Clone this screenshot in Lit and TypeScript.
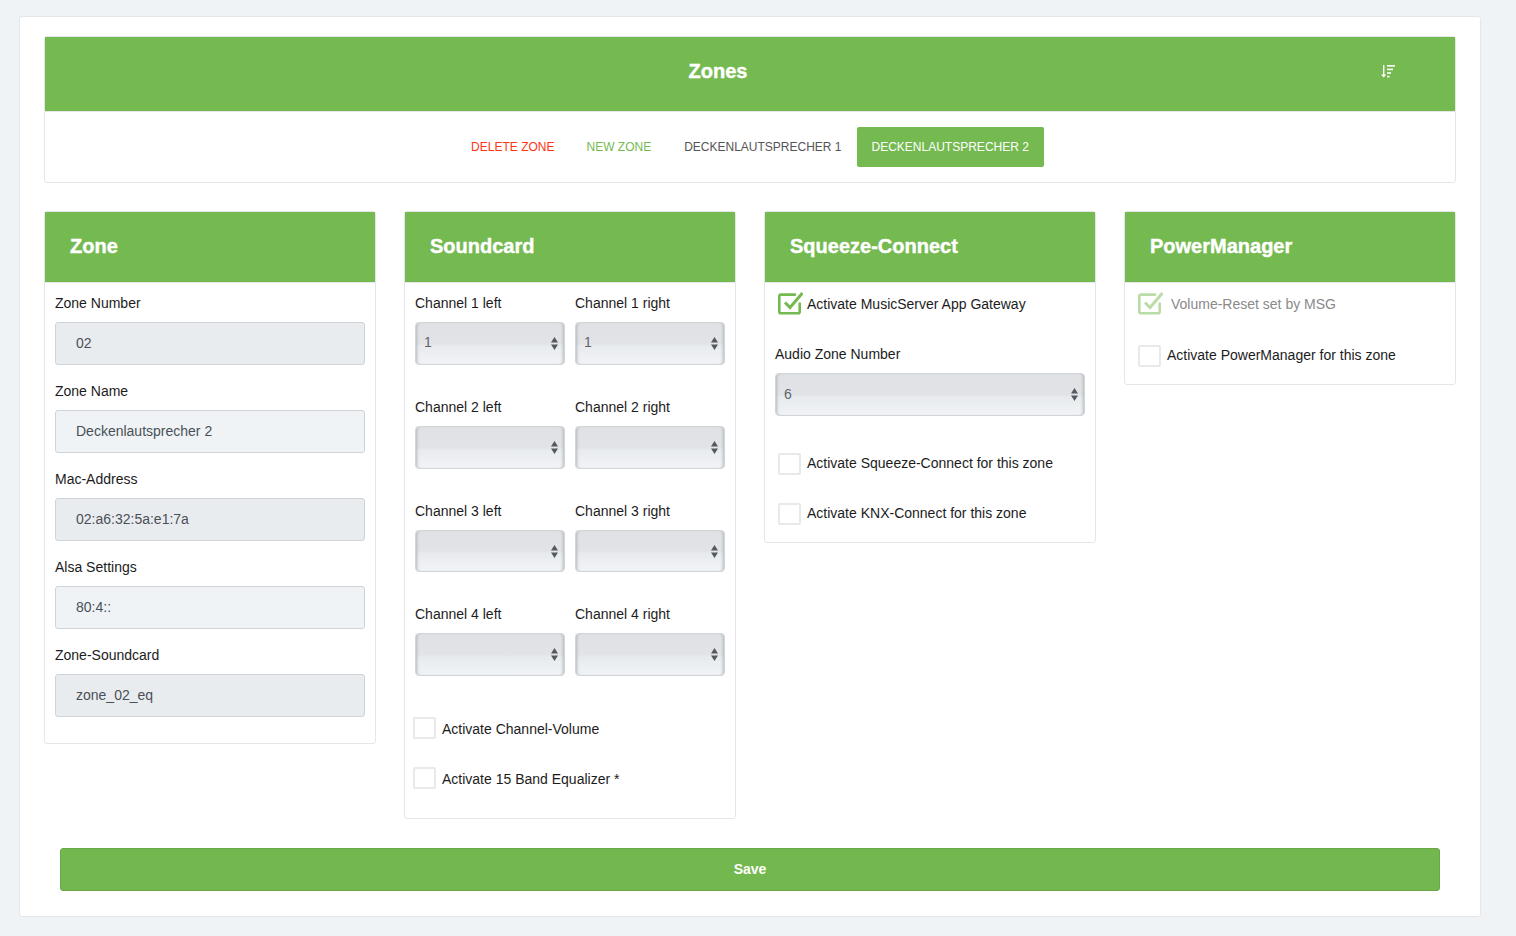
import { LitElement, html, css, svg } from "lit";
import { customElement } from "lit/decorators.js";

const sortIcon = html`<svg class="sort" width="14" height="13" viewBox="0 0 14 13" fill="#fff" aria-hidden="true">
  ${svg`<rect x="2" y="0" width="1.4" height="10"/><path d="M0 9.5h5.4L2.7 12.6z"/>
  <rect x="6" y="0" width="8" height="1.6"/><rect x="6" y="3.6" width="6" height="1.6"/><rect x="6" y="7.2" width="4" height="1.6"/><rect x="6" y="10.8" width="2.6" height="1.6"/>`}
</svg>`;

const checkMark = html`<svg class="tick" width="25" height="25" viewBox="0 0 25 25" fill="none" aria-hidden="true">
  ${svg`<path d="M21.7 11.5V19.7a1.5 1.5 0 0 1-1.500 1.500H2.800A1.500 1.500 0 0 1 1.300 19.700V4.100A1.500 1.500 0 0 1 2.800 2.600H17" stroke="currentColor" stroke-width="2.600" stroke-linecap="round"/>
  <path d="M7 10.500L12 15.500L24.500 1" stroke="currentColor" stroke-width="3"/>`}
</svg>`;

const arrows = html`<svg class="arrows" width="7" height="13" viewBox="0 0 7 13" fill="#555a60" aria-hidden="true">
  ${svg`<path d="M3.500 0L7 5.500H0zM3.500 13L0 7.500h7z"/>`}
</svg>`;

@customElement("app-root")
export class AppRoot extends LitElement {
  static styles = css`
    :host {
      display: block;
      min-height: 936px;
      box-sizing: border-box;
      padding: 16px 35px 19px 19px;
      background: #eff3f6;
      font-family: "Liberation Sans", Arial, sans-serif;
      font-size: 14px;
      line-height: 20px;
      color: #1c1c1c;
    }
    * { box-sizing: border-box; }
    .page {
      background: #fff;
      border: 1px solid #e4e7ea;
      border-radius: 3px;
      padding: 19px 24px 25px;
      height: 901px;
    }
    .card {
      background: #fff;
      border: 1px solid #e4e6e9;
      border-radius: 3px;
    }
    .top-head {
      height: 74px;
      background: #75b951;
      display: flex;
      align-items: center;
      padding-right: 60px;
      color: #fff;
    }
    .top-head h1 {
      flex: 1;
      margin: 0;
      padding: 0 0 6px 10px;
      text-align: center;
      font-size: 20px;
      line-height: 24px;
      font-weight: 700;
      -webkit-text-stroke: 0.4px #fff;
    }
    .sort { display: block; margin-top: -6px; }
    .tabs {
      height: 71px;
      border-top: 1px solid #e4e6e9;
      display: flex;
      justify-content: center;
      align-items: flex-start;
      padding-top: 15px;
    }
    .tab {
      height: 40px;
      padding: 0 15px;
      font-size: 12px;
      line-height: 40px;
      border-radius: 2px;
      color: #555;
      white-space: nowrap;
    }
    .tab.red { color: #ff3516; margin-right: 2px; }
    .tab.green { color: #75b951; margin-right: 3px; }
    .tab.on { background: #75b951; color: #fff; }
    .cols {
      display: grid;
      grid-template-columns: repeat(4, 332px);
      gap: 28px;
      align-items: start;
      margin-top: 28px;
    }
    .col-head {
      height: 70px;
      background: #75b951;
      color: #fff;
      display: flex;
      align-items: center;
      padding: 0 0 2px 25px;
    }
    .col-head h2 {
      margin: 0;
      font-size: 20px;
      line-height: 24px;
      font-weight: 700;
      -webkit-text-stroke: 0.4px #fff;
    }
    .body {
      border-top: 1px solid #e4e6e9;
      padding: 10px 10px 0;
    }
    label { display: block; height: 20px; margin-bottom: 9px; }
    input.field {
      display: block;
      width: 100%;
      height: 43px;
      margin: 0 0 16px;
      padding: 0 20px 2px;
      border: 1px solid #ced4da;
      border-radius: 3px;
      background: #eff3f6;
      color: #495057;
      font: inherit;
      outline: none;
    }
    input.field.dark { background: #e9ecef; }
    .zone-body { padding-bottom: 10px; }
    .chan {
      display: grid;
      grid-template-columns: 150px 150px;
      gap: 0 10px;
      margin-bottom: 32px;
    }
    .sel { position: relative; height: 42.8px; }
    .sel select {
      appearance: none;
      -webkit-appearance: none;
      display: block;
      width: 100%;
      height: 100%;
      padding: 0 24px 2px 8px;
      border: 1px solid #d0d5da;
      border-radius: 4px;
      background: linear-gradient(#dfe1e4 0%, #e1e3e6 50%, #e8ebee 56%, #f1f3f6 100%);
      box-shadow: inset 3px 0 3px -2px #b4b8bc, inset -3px 0 3px -2px #b4b8bc;
      color: #5f656b;
      font: inherit;
      opacity: 1;
    }
    .arrows { position: absolute; right: 7px; top: 15px; pointer-events: none; }
    .check {
      display: flex;
      align-items: center;
      height: 25px;
    }
    .t { margin-bottom: 2px; }
    .box {
      flex: none;
      width: 23px;
      height: 22px;
      margin-right: 6px;
      border: 2px solid #e8e9eb;
      border-radius: 2px;
      background: #fff;
    }
    .tick { flex: none; display: block; color: #75b951; }
    .faded { color: #8a8a8a; }
    .faded .tick { color: #badca7; }
    .sound-checks { margin: 40.8px 0 0 -2px; padding: 0 0 26px; }
    .sound-checks .check + .check { margin-top: 25px; }
    .sound-checks .box { margin-bottom: 2px; }
    .squeeze { padding-top: 9px; }
    .squeeze .check { padding-left: 3px; }
    .squeeze .tick { margin-right: 4px; }
    .squeeze label { margin-top: 27px; }
    .squeeze .sel { height: 43px; margin-bottom: 35px; }
    .squeeze .check + .check { margin-top: 25px; }
    .squeeze .last { margin-bottom: 16px; }
    .power { padding: 9px 10px 16px 13px; }
    .power .tick { margin-right: 8px; }
    .power .check + .check { margin-top: 26px; }
    .save {
      display: block;
      width: 1380px;
      height: 43px;
      margin: 29px 0 0 16px;
      padding: 0 0 1px;
      background: #72b84e;
      border: 1px solid #68a848;
      border-radius: 3px;
      color: #fff;
      font: 700 14px/20px "Liberation Sans", Arial, sans-serif;
    }
  `;

  private select(value = "") {
    return html`<div class="sel"><select disabled><option>${value}</option></select>${arrows}</div>`;
  }

  private channel(n: number, a = "", b = "") {
    return html`<div class="chan">
      <div><label>Channel ${n} left</label>${this.select(a)}</div>
      <div><label>Channel ${n} right</label>${this.select(b)}</div>
    </div>`;
  }

  render() {
    return html`<div class="page">
      <section class="card">
        <header class="top-head"><h1>Zones</h1>${sortIcon}</header>
        <nav class="tabs">
          <span class="tab red">DELETE ZONE</span>
          <span class="tab green">NEW ZONE</span>
          <span class="tab">DECKENLAUTSPRECHER 1</span>
          <span class="tab on">DECKENLAUTSPRECHER 2</span>
        </nav>
      </section>

      <div class="cols">
        <section class="card">
          <header class="col-head"><h2>Zone</h2></header>
          <div class="body zone-body">
            <label>Zone Number</label><input class="field dark" readonly .value=${"02"} />
            <label>Zone Name</label><input class="field" readonly .value=${"Deckenlautsprecher 2"} />
            <label>Mac-Address</label><input class="field dark" readonly .value=${"02:a6:32:5a:e1:7a"} />
            <label>Alsa Settings</label><input class="field" readonly .value=${"80:4::"} />
            <label>Zone-Soundcard</label><input class="field dark" readonly .value=${"zone_02_eq"} />
          </div>
        </section>

        <section class="card">
          <header class="col-head"><h2>Soundcard</h2></header>
          <div class="body">
            ${this.channel(1, "1", "1")}
            ${this.channel(2)}
            ${this.channel(3)}
            ${this.channel(4)}
            <div class="sound-checks">
              <div class="check"><span class="box"></span>Activate Channel-Volume</div>
              <div class="check"><span class="box"></span>Activate 15 Band Equalizer *</div>
            </div>
          </div>
        </section>

        <section class="card">
          <header class="col-head"><h2>Squeeze-Connect</h2></header>
          <div class="body squeeze">
            <div class="check">${checkMark}<span class="t">Activate MusicServer App Gateway</span></div>
            <label>Audio Zone Number</label>
            ${this.select("6")}
            <div class="check"><span class="box"></span><span class="t">Activate Squeeze-Connect for this zone</span></div>
            <div class="check last"><span class="box"></span><span class="t">Activate KNX-Connect for this zone</span></div>
          </div>
        </section>

        <section class="card">
          <header class="col-head"><h2>PowerManager</h2></header>
          <div class="body power">
            <div class="check faded">${checkMark}<span class="t">Volume-Reset set by MSG</span></div>
            <div class="check"><span class="box"></span><span class="t">Activate PowerManager for this zone</span></div>
          </div>
        </section>
      </div>

      <button class="save">Save</button>
    </div>`;
  }
}
